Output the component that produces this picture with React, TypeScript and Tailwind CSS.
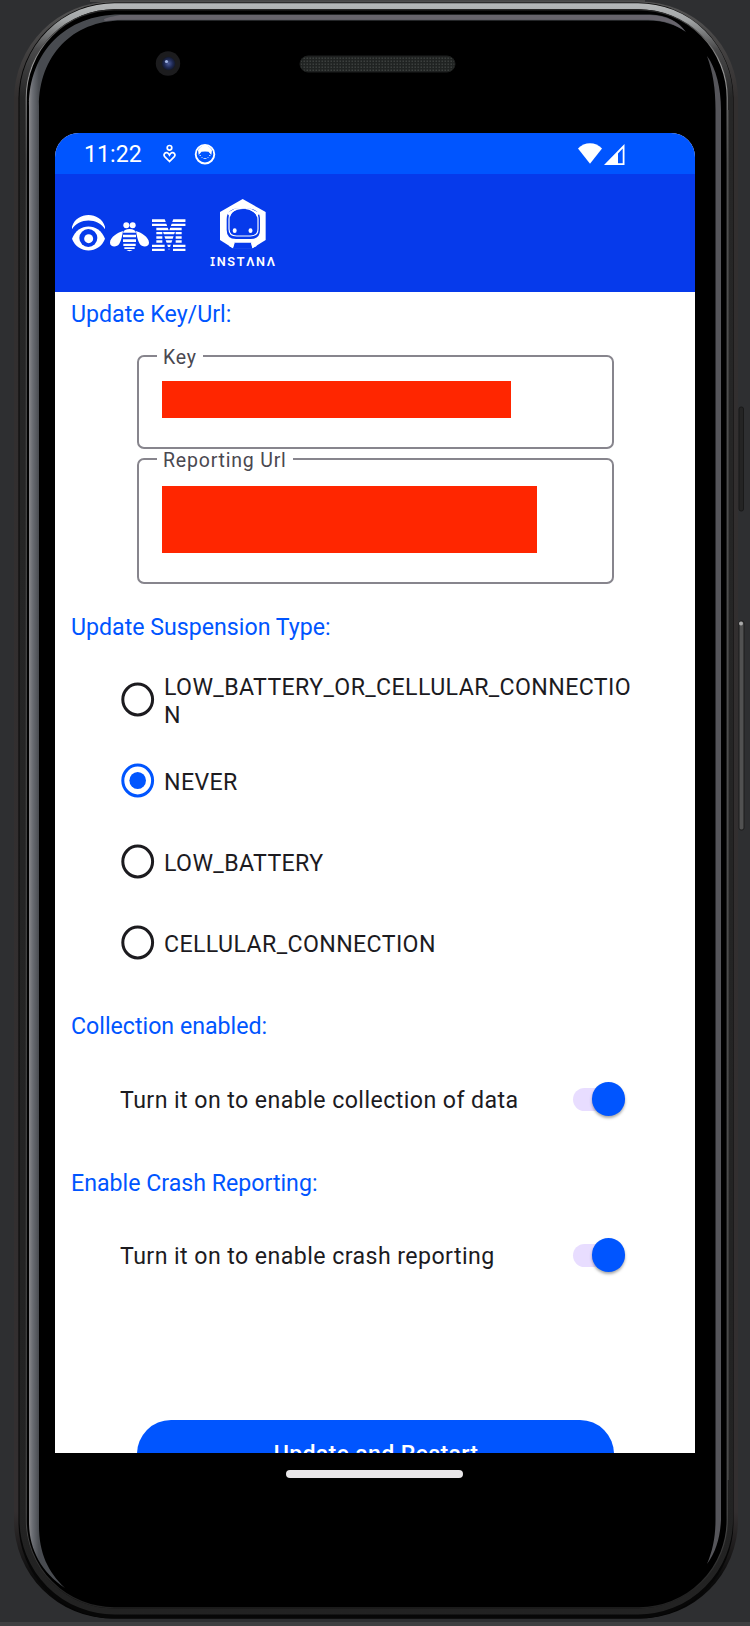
import type { ReactNode } from "react";

const SUSPENSION_TYPES = [
  { label: "LOW_BATTERY_OR_CELLULAR_CONNECTION", selected: false },
  { label: "NEVER", selected: true },
  { label: "LOW_BATTERY", selected: false },
  { label: "CELLULAR_CONNECTION", selected: false },
];

function DeviceFrame() {
  return (
    <svg className="absolute inset-0" width="750" height="1626" viewBox="0 0 750 1626" fill="none">
      <defs>
        <linearGradient id="rim" x1="0" y1="0" x2="0" y2="1626" gradientUnits="userSpaceOnUse">
          <stop offset="0" stopColor="#b9bcbd" />
          <stop offset="0.012" stopColor="#a3a6a7" />
          <stop offset="0.03" stopColor="#4a4a4b" />
          <stop offset="0.06" stopColor="#262626" />
          <stop offset="1" stopColor="#222222" />
        </linearGradient>
        <linearGradient id="edge" x1="0" y1="0" x2="0" y2="1626" gradientUnits="userSpaceOnUse">
          <stop offset="0" stopColor="#555555" />
          <stop offset="0.06" stopColor="#322f2f" />
          <stop offset="0.93" stopColor="#332f30" />
          <stop offset="0.97" stopColor="#0c0c0c" />
          <stop offset="1" stopColor="#000000" />
        </linearGradient>
        <linearGradient id="line" x1="0" y1="0" x2="0" y2="1626" gradientUnits="userSpaceOnUse">
          <stop offset="0" stopColor="#111111" />
          <stop offset="0.04" stopColor="#999999" />
          <stop offset="0.1" stopColor="#555555" />
          <stop offset="0.93" stopColor="#4b4b4b" />
          <stop offset="0.98" stopColor="#222222" />
        </linearGradient>
        <linearGradient id="glassL" x1="29" y1="0" x2="39" y2="0" gradientUnits="userSpaceOnUse">
          <stop offset="0" stopColor="#88888b" />
          <stop offset="0.35" stopColor="#6b6e74" />
          <stop offset="1" stopColor="#484b50" />
        </linearGradient>
        <pattern id="mesh" width="3" height="3" patternUnits="userSpaceOnUse">
          <rect width="3" height="3" fill="#202322" />
          <rect x="0.5" y="0.5" width="1.5" height="1.5" fill="#3b3f3d" />
        </pattern>
        <radialGradient id="lens">
          <stop offset="0" stopColor="#4a5a96" />
          <stop offset="0.6" stopColor="#202b57" />
          <stop offset="1" stopColor="#131829" />
        </radialGradient>
      </defs>
      <path d="M90 0H645V2H90Z" fill="#484848" />
      <rect x="0" y="1622" width="750" height="4" fill="#3f3f41" />
      <rect x="14" y="1.5" width="724" height="1617" rx="98" fill="url(#edge)" />
      <rect x="18.5" y="2.5" width="715" height="1616" rx="96" fill="#070707" />
      <rect x="22.5" y="6.2" width="707.5" height="1605.3" rx="92" stroke="url(#rim)" strokeWidth="6" />
      <rect x="26.2" y="9.8" width="701" height="1598" rx="88" fill="#000" stroke="url(#line)" strokeWidth="1.2" />
      <path
        d="M120 14.5H650C667 15 679 22 686 32C676 25 664 20.500 648 20.500H122C72 20.500 39 56 39 106V1526C39 1553 48 1572 65 1588C41 1572 29 1549 29 1522V106C29 52 66 14.500 120 14.500Z"
        fill="url(#glassL)"
      />
      <path d="M120 15H650C667 15.500 678 22 685 31C676 25 664 19.800 648 19.800H122Q112 19.800 106 21Q98 19 120 15Z" fill="#67646c" />
      <path d="M707 56C716 68 721 88 721 110V1520C720 1538 716 1552 707 1564C713 1550 715.500 1536 715.500 1520V110C715.500 88 713 73 707 56Z" fill="#55555a" />
      <path d="M728 1480V110" stroke="#555554" strokeWidth="1" />
      <rect x="739" y="407" width="4.500" height="104" rx="2" fill="#242424" stroke="#191919" />
      <rect x="739" y="621" width="5" height="209" rx="2" fill="#515151" stroke="#1c1c1c" />
      <circle cx="741" cy="623.500" r="2" fill="#aaaaaa" />
      <circle cx="168" cy="63.500" r="12.200" fill="#1c1c1e" />
      <circle cx="168.500" cy="63.500" r="6.800" fill="url(#lens)" />
      <circle cx="166.500" cy="61.500" r="1.600" fill="#9fb2e2" />
      <rect x="300" y="56" width="155" height="16" rx="8" fill="url(#mesh)" stroke="#1d1f1e" />
    </svg>
  );
}

function StatusBar() {
  return (
    <div className="flex h-[41px] shrink-0 items-center bg-[#0055ff] pl-[29px] text-white">
      <span className="mt-[1px] w-[79px] text-[24px] leading-[28px]">
        <span className="inline-block origin-left scale-x-[0.965]">11:22</span>
      </span>
      <svg className="mt-[1px]" width="13" height="20" viewBox="0 0 13 20" fill="none" stroke="#fff" strokeWidth="1.700">
        <circle cx="6.500" cy="3.800" r="2.300" />
        <path d="M6.500 17.500L1.700 12.600C0 10.500 2 8.200 4 8.600C5.300 8.900 5.900 9.900 6.500 11C7.100 9.900 7.700 8.900 9 8.600C11 8.200 13 10.500 11.300 12.600Z" />
      </svg>
      <svg className="ml-[18px]" width="22" height="22" viewBox="0 0 22 22" fill="none">
        <circle cx="11" cy="11.200" r="9.300" stroke="#fff" strokeWidth="1.900" />
        <path d="M4 7Q11 -3 18 7L17.300 12L14.500 8.800Q11 8 7.500 8.800L4.700 12Z" fill="#fff" />
        <path d="M5.500 12.500h1.500M7.500 14.500h1M15 12.500h1.500M13.500 14.500h1M9.500 15.500h3" stroke="#b9d0ff" strokeWidth="1" />
      </svg>
      <svg className="ml-[362px]" width="24" height="21" viewBox="0 0 24 21" fill="#fff">
        <path d="M0 5.500C3.300 2 7.500 0.200 12 0.200S20.700 2 24 5.500L12 20.800Z" />
      </svg>
      <svg className="mt-[1px] ml-[2px]" width="21" height="21" viewBox="0 0 21 21" fill="#fff" fillRule="evenodd">
        <path d="M20.500 0V21H0ZM18.700 4.500L14 9.500V19.200H18.700Z" />
      </svg>
    </div>
  );
}

function IbmLogo() {
  return (
    <svg width="115" height="38" viewBox="66 101 345 114" fill="#fff">
      <defs>
        <clipPath id="m-shape">
          <path d="M306 116H344L357 153L370 116H407V139H395V189H407V213H369V189H377V148L357 210L337 148V189H344V213H306V189H319V139H306Z" />
        </clipPath>
      </defs>
      <path d="M66 139C80 92 151 92 165 139V147C145 112 86 112 66 147Z" />
      <path d="M66 175C84 126 147 126 165 175C147 222 84 222 66 175Z" />
      <circle cx="115" cy="173" r="27" fill="#063aeb" />
      <circle cx="116" cy="175" r="13.500" />
      <circle cx="229" cy="135" r="9" />
      <circle cx="248" cy="135" r="9" />
      <path d="M219 157Q222 146 238.500 146T258 157Z" />
      <path d="M219 163H258V171H219ZM219 177H258V185H219ZM220 190H257V197H220ZM223 201H254V206H223ZM229 209H248Q238.500 216 229 209Z" />
      <path d="M219 152C205 156 180 170 180 187C180 201 201 202 208 190C214 180 217 165 219 152Z" />
      <path d="M258 152C272 156 297 170 297 187C297 201 276 202 269 190C263 180 260 165 258 152Z" />
      <path
        clipPath="url(#m-shape)"
        d="M306 117H408V125H306ZM306 130H408V137H306ZM306 142H408V150H306ZM306 155H408V162H306ZM306 168H408V175H306ZM306 180H408V187H306ZM306 193H408V200H306ZM306 205H408V212H306Z"
      />
    </svg>
  );
}

function InstanaLogo() {
  return (
    <svg width="68" height="70" viewBox="478 55 204 210" fill="#fff">
      <path d="M579 58L648 97V181L608 206H550L511 181V97Z" />
      <path d="M531 118C531 94 548 85 580 85S631 94 631 118V150Q631 178 603 178H559Q531 178 531 150Z" fill="#063aeb" />
      <path
        d="M538 118C538 99 553 88.500 580 88.500S625 99 625 118V148Q625 169 602 169H561Q538 169 538 148Z"
        fill="#063aeb"
        stroke="#fff"
        strokeWidth="3.500"
      />
      <path d="M541 112C546 96 558 87 580 87S616 96 622 112L630 100L600 86L580 84L558 86L532 100Z" />
      <path d="M542 128C542 99 556 88 580 88S621 99 621 128V148Q621 164 602 164H561Q542 164 542 148Z" fill="#063aeb" />
      <ellipse cx="555" cy="153" rx="6" ry="7" />
      <ellipse cx="602.500" cy="153" rx="6" ry="7" />
      <path d="M554 189L605 189L609 207H549Z" fill="#063aeb" />
      <path d="M541 184L555 190L550 206L538 199ZM618 184L604 190L608 206L621 199Z" />
      <g fontSize="38" fontFamily="Roboto, sans-serif">
        <text x="480" y="258" fontWeight="700" textLength="17" lengthAdjust="spacingAndGlyphs" fontFamily="DejaVu Sans Mono, monospace">
          I
        </text>
        <text x="501" y="258" textLength="175" lengthAdjust="spacing" fontWeight="600">
          NSTΛNΛ
        </text>
      </g>
    </svg>
  );
}

function Heading({ children }: { children: ReactNode }) {
  return (
    <h2 className="h-7 pl-[16px] text-[24px] leading-[28px] text-[#0055ff]">
      <span className="inline-block origin-left scale-x-[0.965]">{children}</span>
    </h2>
  );
}

function Field({ label, children }: { label: string; children: ReactNode }) {
  return (
    <div className="relative rounded-[7px] border-2 border-[#87858d] pl-[23px]">
      <span className="absolute -top-[11px] left-[18px] bg-white px-[6px] text-[19.5px] leading-[24px] tracking-[0.8px] text-[#4a4850]">
        {label}
      </span>
      {children}
    </div>
  );
}

function Radio({ label, selected }: { label: string; selected: boolean }) {
  return (
    <label className="flex h-[81px] items-center pl-[66px]">
      <svg className="shrink-0" width="34" height="35" viewBox="0 0 34 35" fill="none">
        <ellipse cx="16.700" cy="17.500" rx="14.900" ry="15.400" stroke={selected ? "#0055ff" : "#1c1b1f"} strokeWidth="3" />
        {selected && <ellipse cx="16.700" cy="17.500" rx="8.300" ry="8.600" fill="#0055ff" />}
      </svg>
      <span className="mt-[2px] ml-[9px] w-[492px] origin-left scale-x-[0.965] text-[24px] leading-[28px] tracking-[0.39px] break-all text-[#1c1b1f]">
        {label}
      </span>
    </label>
  );
}

function SwitchRow({ label }: { label: string }) {
  return (
    <div className="flex h-9 items-center pl-[65px]">
      <span className="w-[453px] text-[24px] leading-[28px] whitespace-nowrap text-[#1c1b1f]">
        <span className="mt-[1px] inline-block origin-left scale-x-[0.965] tracking-[0.44px]">{label}</span>
      </span>
      <span className="flex h-[23px] w-[52px] items-center justify-end rounded-full bg-[#e8ddff]">
        <span className="h-[34px] w-[33px] shrink-0 rounded-full bg-[#0055ff] shadow-[0_2px_3px_rgba(0,0,0,0.35)]" />
      </span>
    </div>
  );
}

export default function App() {
  return (
    <div className="relative h-[1626px] w-[750px] overflow-hidden bg-[#2e2f31] pt-[133px] font-['Roboto',sans-serif]">
      <DeviceFrame />
      <div className="relative ml-[55px] flex h-[1320px] w-[640px] flex-col overflow-hidden rounded-t-[24px] bg-white">
        <StatusBar />
        <header className="flex h-[118px] shrink-0 items-start bg-[#063aeb] pl-[17px]">
          <div className="mt-[40px]">
            <IbmLogo />
          </div>
          <div className="mt-[24px] ml-[22px]">
            <InstanaLogo />
          </div>
        </header>
        <main className="flex shrink-0 flex-col pt-2">
          <Heading>Update Key/Url:</Heading>
          <div className="mt-[27px] ml-[82px] flex w-[477px] flex-col gap-[9px]">
            <Field label="Key">
              <div className="mt-[24px] mb-[29px] h-[37px] w-[349px] bg-[#ff2600]" />
            </Field>
            <Field label="Reporting Url">
              <div className="mt-[26px] mb-[29px] h-[67px] w-[375px] bg-[#ff2600]" />
            </Field>
          </div>
          <div className="mt-[29px]">
            <Heading>Update Suspension Type:</Heading>
          </div>
          <div className="mt-[18px] flex flex-col">
            {SUSPENSION_TYPES.map((type) => (
              <Radio key={type.label} {...type} />
            ))}
          </div>
          <div className="mt-[29px]">
            <Heading>Collection enabled:</Heading>
          </div>
          <div className="mt-[41px]">
            <SwitchRow label="Turn it on to enable collection of data" />
          </div>
          <div className="mt-[52px]">
            <Heading>Enable Crash Reporting:</Heading>
          </div>
          <div className="mt-[40px]">
            <SwitchRow label="Turn it on to enable crash reporting" />
          </div>
          <button className="mt-[147px] ml-[82px] h-[68px] w-[477px] rounded-[34px] bg-[#0055ff] text-[24px] leading-[28px] font-medium text-white">
            <span className="inline-block scale-x-[0.965] tracking-[0.3px]">Update and Restart</span>
          </button>
        </main>
      </div>
      <div className="relative mt-[17px] ml-[286px] h-[8px] w-[177px] rounded-full bg-[#e9e7e9]" />
    </div>
  );
}
